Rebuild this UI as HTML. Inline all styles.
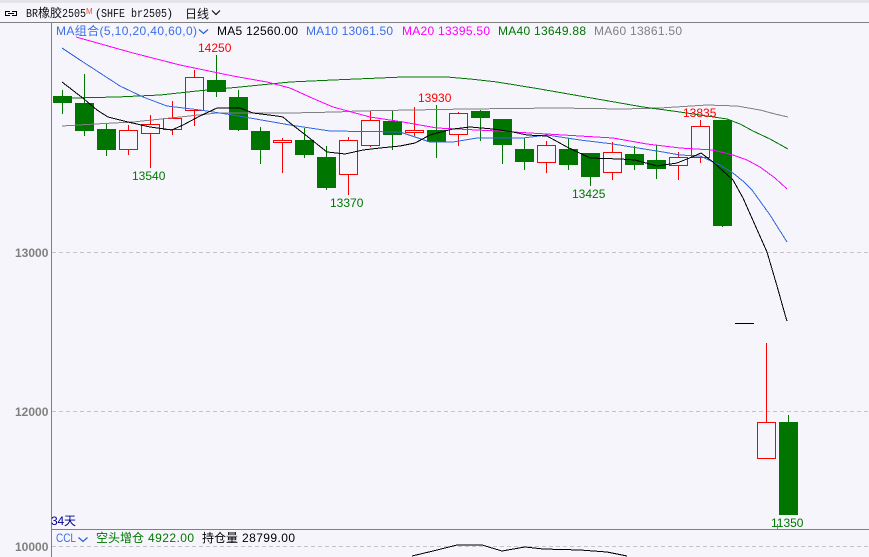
<!DOCTYPE html>
<html><head><meta charset="utf-8"><title>BR橡胶2505</title>
<style>
html,body{margin:0;padding:0;background:#f5f5fb;width:869px;height:557px;overflow:hidden}
svg{display:block}
text{font-family:"Liberation Sans","WenQuanYi Zen Hei","Noto Sans CJK SC",sans-serif;font-size:12px}
.m{font-family:"Liberation Mono","WenQuanYi Zen Hei",monospace}
.ax{font-weight:bold;fill:#808080}
polyline{fill:none;stroke-width:1}
</style></head><body>
<svg width="869" height="557" viewBox="0 0 869 557" xmlns="http://www.w3.org/2000/svg">
<rect width="869" height="557" fill="#f5f5fb"/>
<rect width="869" height="3" fill="#e3e4e8"/>
<g shape-rendering="crispEdges">
<rect x="0" y="22" width="869" height="1" fill="#808080"/>
<rect x="51" y="22" width="1" height="535" fill="#808080"/>
<rect x="51" y="529" width="818" height="1" fill="#808080"/>
<path d="M52 252.5H869M52 411.5H869M52 546.5H869" stroke="#c4c4c8" stroke-width="1" stroke-dasharray="4 3" fill="none"/>
<path d="M777.5 524V530" stroke="#808080" fill="none"/>
<!-- green wicks -->
<path fill="none" stroke="#007600" d="M62.5 90V114M84.5 74V136M106.5 123V156M216.5 55V97M238.5 90V131M260.5 127V164M304.5 128V158M326.5 146V190M392.5 111V150M436.5 105V158M480.5 110V141M502.5 119V164M524.5 138V170M568.5 138V170M590.5 153V186M634.5 146V170M656.5 145V179M722.5 120V227M788.5 415V422"/>
<!-- green bodies -->
<g fill="#007600">
<rect x="53" y="96" width="19" height="7"/>
<rect x="75" y="103" width="19" height="28"/>
<rect x="97" y="129" width="19" height="21"/>
<rect x="207" y="80" width="19" height="12"/>
<rect x="229" y="97" width="19" height="33"/>
<rect x="251" y="131" width="19" height="19"/>
<rect x="295" y="140" width="19" height="15"/>
<rect x="317" y="157" width="19" height="31"/>
<rect x="383" y="121" width="19" height="14"/>
<rect x="427" y="130" width="19" height="12"/>
<rect x="471" y="111" width="19" height="7"/>
<rect x="493" y="119" width="19" height="26"/>
<rect x="515" y="149" width="19" height="13"/>
<rect x="559" y="149" width="19" height="16"/>
<rect x="581" y="153" width="19" height="24"/>
<rect x="625" y="154" width="19" height="11"/>
<rect x="647" y="160" width="19" height="9"/>
<rect x="713" y="120" width="19" height="106"/>
<rect x="779" y="422" width="19" height="93"/>
</g>
<!-- red wicks -->
<path fill="none" stroke="#ff0000" d="M128.5 125V130M128.5 150V155M150.5 115V124M150.5 134V168M172.5 101V118M172.5 130V135M194.5 70V77M194.5 111V126M282.5 138V140M282.5 143V173M348.5 137V140M348.5 175V195M370.5 111V120M370.5 146V147M414.5 107V130M414.5 133V136M458.5 112V113M458.5 135V146M546.5 141V145M546.5 163V173M612.5 142V152M612.5 173V180M678.5 152V157M678.5 166V180M700.5 120V126M700.5 158V163M766.5 343V422"/>
<!-- red bodies -->
<g fill="none" stroke="#ff0000">
<rect x="119.5" y="130.5" width="18" height="19"/>
<rect x="141.5" y="124.5" width="18" height="9"/>
<rect x="163.5" y="118.5" width="18" height="11"/>
<rect x="185.5" y="77.5" width="18" height="33"/>
<rect x="273.5" y="140.5" width="18" height="2"/>
<rect x="339.5" y="140.5" width="18" height="34"/>
<rect x="361.5" y="120.5" width="18" height="25"/>
<rect x="405.5" y="130.5" width="18" height="2"/>
<rect x="449.5" y="113.5" width="18" height="21"/>
<rect x="537.5" y="145.5" width="18" height="17"/>
<rect x="603.5" y="152.5" width="18" height="20"/>
<rect x="669.5" y="157.5" width="18" height="8"/>
<rect x="691.5" y="126.5" width="18" height="31"/>
<rect x="757.5" y="422.5" width="18" height="36"/>
</g>
<rect x="735" y="323" width="19" height="1" fill="#000"/>
<!-- MA lines -->
<polyline stroke="#808080" points="62,126 95,124 133,122 180,117 217,113 290,113 337,112 357,111 467,109 557,108 623,109 660,108 707,105 737,106 760,110 775,114 788,117"/>
<polyline stroke="#007600" points="72,98 117,97 160,95 197,91 240,87 290,82 333,80 380,78 403,77 447,77 470,79 497,82 540,89 580,96 643,107 680,112 727,119 740,124 753,131 770,139 788,149"/>
<polyline stroke="#ff00ff" points="76,37 133,53 180,65 233,76 267,82 290,88 312,98 333,107 370,117 403,122 437,128 497,131 530,133 580,136 613,138 647,144 680,148 713,150 733,155 747,160 760,167 775,178 787,189"/>
<polyline stroke="#3366dd" points="62,48 80,60 100,73 120,86 143,97 167,106 200,110 233,115 290,125 330,131 400,132 430,142 453,142 477,138 523,138 547,135 580,140 613,144 663,152 680,155 700,156 720,165 733,173 744,182 752,190 770,215 787,242"/>
<polyline stroke="#000000" points="62,82 84,99 97,110 108,117 128,122 150,127 172,130 183,125 200,116 217,108 240,108 253,113 277,116 283,117 290,123 303,133 327,152 345,154 363,150 380,148 400,146 415,143 430,135 437,133 453,129 470,127 493,129 513,132 527,135 547,136 567,147 590,158 620,159 635,160 657,166 677,163 692,157 701,153 713,162 733,180 743,198 755,225 767,252 777,286 786,318 787,321"/>
<polyline stroke="#000000" points="412,556 433,551 457,545 482,545 502,551 525,547 543,549 580,550 607,552 627,556"/>
</g>
<!-- header -->
<g fill="none" stroke="#000" stroke-width="1" shape-rendering="crispEdges">
<path d="M10 11.500H5.500V15.500H10M12 11.500H16.500V15.500H12M8 13.500H14"/>
</g>
<text class="m" x="26" y="17" textLength="12" lengthAdjust="spacingAndGlyphs" fill="#111">BR</text>
<text x="38" y="17" fill="#111">橡胶</text>
<text class="m" x="62" y="17" textLength="24" lengthAdjust="spacingAndGlyphs" fill="#111">2505</text>
<text x="86" y="14" style="font-size:8px" fill="#f05030">M</text>
<text x="96" y="17" fill="#111">(</text>
<text class="m" x="101" y="17" textLength="66" lengthAdjust="spacingAndGlyphs" fill="#111">SHFE br2505</text>
<text x="168" y="17" fill="#111">)</text>
<text x="185" y="18" fill="#111">日线</text>
<path d="M212 10.500L216 14.500L220 10.500" fill="none" stroke="#111" stroke-width="1.2"/>
<!-- MA legend -->
<text x="56" y="35" textLength="141" fill="#3a6ee8">MA组合(5,10,20,40,60,0)</text>
<path d="M199 29.500L203.500 33.500L208 29.500" fill="none" stroke="#2a5fc8" stroke-width="1.2"/>
<text x="217" y="35" textLength="81" fill="#000">MA5 12560.00</text>
<text x="306" y="35" textLength="87" fill="#3a6ee8">MA10 13061.50</text>
<text x="402" y="35" textLength="88" fill="#ff00ff">MA20 13395.50</text>
<text x="498" y="35" textLength="88" fill="#007600">MA40 13649.88</text>
<text x="594" y="35" textLength="88" fill="#808080">MA60 13861.50</text>
<!-- price annotations -->
<text x="198" y="52" fill="#ff0000">14250</text>
<text x="132" y="180" fill="#007600">13540</text>
<text x="330" y="207" fill="#007600">13370</text>
<text x="418" y="102" fill="#ff0000">13930</text>
<text x="572" y="198" fill="#007600">13425</text>
<text x="683" y="117" fill="#ff0000">13835</text>
<text x="771" y="527" fill="#007600">11350</text>
<!-- axis -->
<text class="ax" x="15" y="257">13000</text>
<text class="ax" x="15" y="416">12000</text>
<text class="ax" x="15" y="551">10000</text>
<text x="51" y="525" textLength="25" fill="#000090">34天</text>
<!-- bottom legend -->
<text x="56" y="542" textLength="20" lengthAdjust="spacingAndGlyphs" fill="#3a6ee8">CCL</text>
<path d="M78.500 537.500L83 541.500L87.500 537.500" fill="none" stroke="#2a5fc8" stroke-width="1.2"/>
<text x="96" y="542" fill="#007600">空头增仓</text>
<text x="148" y="542" textLength="46" fill="#007600">4922.00</text>
<text x="202" y="542" fill="#000">持仓量</text>
<text x="242" y="542" textLength="53" fill="#000">28799.00</text>
</svg>
</body></html>
